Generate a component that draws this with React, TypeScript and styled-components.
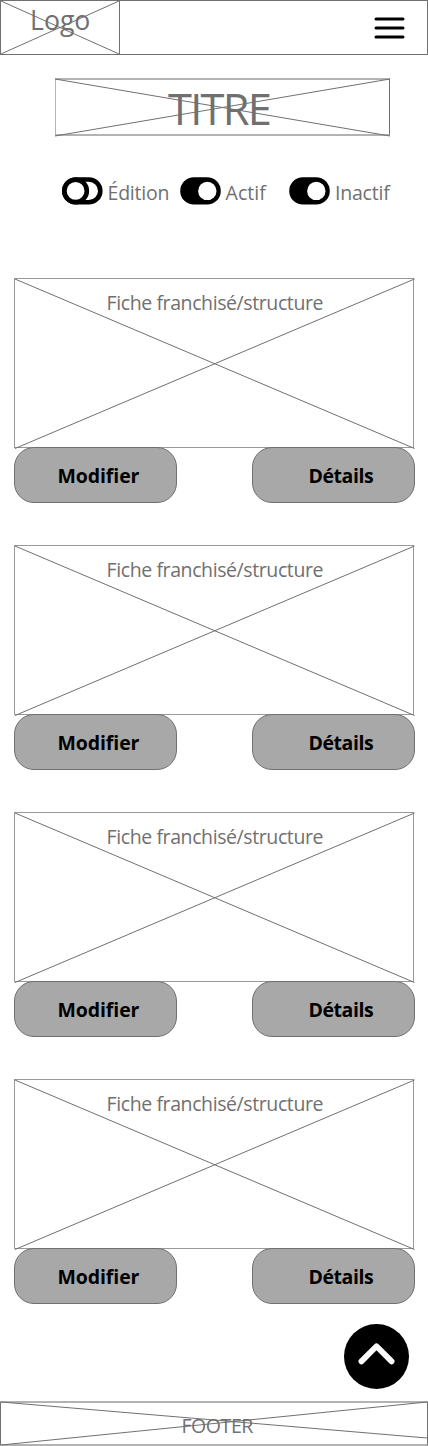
import React from "react";
import styled, { createGlobalStyle } from "styled-components";

const INK = "#707070";
const SOFT = "#b3b3b3";

const GlobalStyle = createGlobalStyle`
  *, *::before, *::after { box-sizing: border-box; }
  body {
    margin: 0;
    background: #fff;
    font-family: "Open Sans", "Noto Sans", sans-serif;
    font-variant-ligatures: none;
  }
`;

const Page = styled.div`
  width: 428px;
  height: 1446px;
  display: flex;
  flex-direction: column;
  overflow: hidden;
`;

const Label = styled.span<{ $size?: number; $tracking?: number; $line: number }>`
  display: block;
  white-space: nowrap;
  color: ${INK};
  font-size: ${(p) => p.$size ?? 19.5}px;
  letter-spacing: ${(p) => p.$tracking ?? 0}px;
  line-height: ${(p) => p.$line}px;
`;

const CrossSvg = styled.svg`
  position: absolute;
  left: 0;
  top: 0;
  overflow: visible;
  pointer-events: none;
`;

const Header = styled.header`
  height: 55px;
  border: 1px solid ${INK};
  display: flex;
  justify-content: space-between;
`;

const LogoBox = styled.div`
  position: relative;
  width: 120px;
  height: 55px;
  margin: -1px 0 0 -1px;
  padding: 0 0 0 29px;
  border: 1px solid ${INK};
`;

const MenuButton = styled.button`
  border: 0;
  padding: 0;
  background: none;
  width: 32px;
  height: 24px;
  margin: 15px 21px 0 0;
  svg { display: block; }
`;

const TitleBox = styled.h1`
  position: relative;
  width: 335px;
  height: 58px;
  margin: 23px 0 0 55px;
  padding-left: 112px;
  font-weight: 400;
  border: solid ${SOFT};
  border-width: 2px 1px;
  border-right-color: ${INK};
`;

const Toggles = styled.div`
  display: flex;
  height: 28px;
  margin: 41px 0 73px 62px;
`;

const ToggleItem = styled.div<{ $width: number }>`
  display: flex;
  width: ${(p) => p.$width}px;
  gap: 4.6px;
  svg { flex: none; }
`;

const Cards = styled.main`
  display: flex;
  flex-direction: column;
  gap: 42px;
  padding: 0 13px 0 14px;
`;

const Card = styled.section`
  height: 225px;
`;

const Sheet = styled.div`
  position: relative;
  width: 400px;
  height: 170px;
  padding-left: 91.5px;
  border: 1px solid #999;
`;

const Actions = styled.div`
  position: relative;
  display: flex;
  justify-content: space-between;
  margin-top: -1px;
`;

const ActionButton = styled.button<{ $indent: number; $tracking: number }>`
  width: 163px;
  height: 56px;
  padding: 0 0 0 ${(p) => p.$indent}px;
  border: 1px solid ${INK};
  border-radius: 20px;
  background: #a8a8a8;
  color: #000;
  font: 700 19.5px/56px "Open Sans", "Noto Sans", sans-serif;
  letter-spacing: ${(p) => p.$tracking}px;
  text-align: left;
`;

const TopButton = styled.button`
  align-self: flex-end;
  flex: none;
  width: 65px;
  height: 65px;
  margin: 20px 19px 12px 0;
  padding: 0;
  border: 0;
  border-radius: 50%;
  background: #000;
  svg { display: block; }
`;

const Footer = styled.footer`
  position: relative;
  flex: none;
  height: 45px;
  padding-left: 180.4px;
  border: solid ${SOFT};
  border-width: 2px 1px;
  border-left-color: ${INK};
  border-right-color: ${INK};
`;

function Cross({ w, h, lines }: { w: number; h: number; lines: number[][] }) {
  return (
    <CrossSvg width={w} height={h} stroke={INK} strokeWidth="1">
      {lines.map(([x1, y1, x2, y2]) => (
        <line key={`${y1}-${y2}`} x1={x1} y1={y1} x2={x2} y2={y2} />
      ))}
    </CrossSvg>
  );
}

function Switch({ on }: { on: boolean }) {
  return (
    <svg width="41" height="28" viewBox="0 0 41 28">
      {on ? (
        <>
          <rect x="0.2" y="0.2" width="40.6" height="27.4" rx="13.7" />
          <circle cx="27.3" cy="13.9" r="9.2" fill="#fff" />
        </>
      ) : (
        <>
          <rect x="2.3" y="2.5" width="36" height="22.8" rx="11.4" fill="#fff" stroke="#000" strokeWidth="4.6" />
          <circle cx="13.6" cy="13.9" r="11.2" fill="#fff" stroke="#000" strokeWidth="4.6" />
        </>
      )}
    </svg>
  );
}

const toggles = [
  { label: "Édition", on: false, width: 118, tracking: -0.25 },
  { label: "Actif", on: true, width: 109.3, tracking: 0 },
  { label: "Inactif", on: true, width: 110, tracking: -0.2 },
];

export default function App() {
  return (
    <>
      <GlobalStyle />
      <Page>
        <Header>
          <LogoBox>
            <Label $size={26.6} $line={38}>Logo</Label>
            <Cross w={118} h={53} lines={[[0, 0, 118, 53], [0, 53, 118, 0]]} />
          </LogoBox>
          <MenuButton aria-label="Menu">
            <svg width="32" height="24" stroke="#000" strokeWidth="3" strokeLinecap="round">
              <path d="M2 3H29M2 12H29M2 21H29" />
            </svg>
          </MenuButton>
        </Header>

        <TitleBox>
          <Label as="span" $size={43.4} $line={58} $tracking={-1.75}>TITRE</Label>
          <Cross w={333} h={54} lines={[[-1, -1, 334, 56], [-1, 56, 334, -1]]} />
        </TitleBox>

        <Toggles>
          {toggles.map((t) => (
            <ToggleItem key={t.label} $width={t.width}>
              <Switch on={t.on} />
              <Label $line={31} $tracking={t.tracking}>{t.label}</Label>
            </ToggleItem>
          ))}
        </Toggles>

        <Cards>
          {[1, 2, 3, 4].map((id) => (
            <Card key={id}>
              <Sheet>
                <Label $line={48} $tracking={-0.4}>Fiche franchisé/structure</Label>
                <Cross w={398} h={168} lines={[[0, 0, 399.5, 169.5], [0, 169.5, 399.5, 0]]} />
              </Sheet>
              <Actions>
                <ActionButton $indent={42.5} $tracking={-0.1}>Modifier</ActionButton>
                <ActionButton $indent={55.5} $tracking={-0.45}>Détails</ActionButton>
              </Actions>
            </Card>
          ))}
        </Cards>

        <TopButton aria-label="Haut de page">
          <svg width="65" height="65" fill="none" stroke="#fff" strokeWidth="5.8" strokeLinecap="round" strokeLinejoin="round">
            <path d="M17.4 37.4L32.5 22.3L47.6 37.4" />
          </svg>
        </TopButton>

        <Footer>
          <Label $line={46} $tracking={-0.4}>FOOTER</Label>
          <Cross w={426} h={41} lines={[[0, -1, 426, 35], [0, 42, 426, -1]]} />
        </Footer>
      </Page>
    </>
  );
}
